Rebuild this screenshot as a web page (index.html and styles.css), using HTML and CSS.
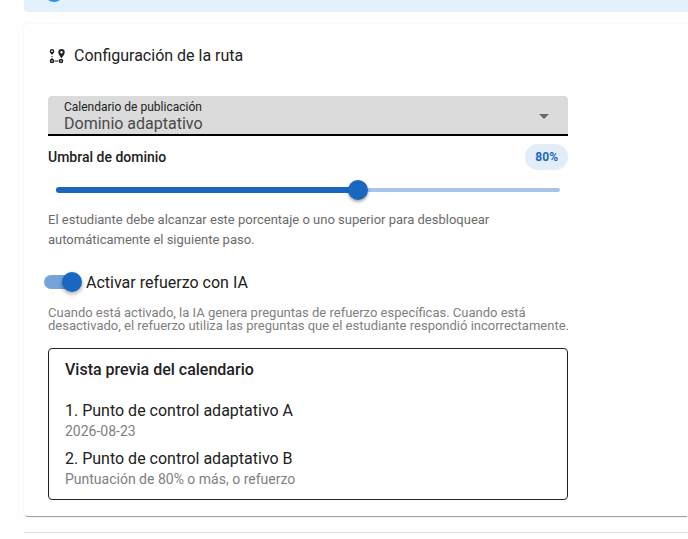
FILE: index.html
```html
<!DOCTYPE html>
<html lang="es">
<head>
  <meta charset="UTF-8">
  <meta name="viewport" content="width=device-width, initial-scale=1.0">
  <title>Configuración de la ruta</title>
  <link rel="stylesheet" href="styles.css">
</head>
<body>
  <main class="page">
    <div class="info-banner">
      <svg class="info-icon" viewBox="0 0 20 20" aria-hidden="true">
        <circle cx="10" cy="10" r="10" fill="#2196f3"/>
        <path d="M9 9h2v6H9zM9 5h2v2H9z" fill="#fff"/>
      </svg>
    </div>

    <section class="card">
      <h2 class="card-title">
        <svg class="route-icon" viewBox="0 0 18 16" aria-hidden="true">
          <g fill="none" stroke="#212121" stroke-width="1.6">
            <circle cx="4" cy="3.200" r="1.500"/>
            <circle cx="4" cy="13" r="1.500"/>
            <circle cx="13" cy="13" r="1.500"/>
          </g>
          <path d="M1.900 4.200h4.200L4 7z" fill="#212121"/>
          <circle cx="4" cy="3.200" r=".7" fill="#fff"/>
          <path d="M4 8v1M4 10v1M6.500 13h4" fill="none" stroke="#212121" stroke-width="1.2"/>
          <path fill="#212121" fill-rule="evenodd" d="M13.500 1a3.200 3.200 0 0 0-3.200 3.200c0 2.300 3.200 6 3.200 6s3.200-3.700 3.200-6A3.200 3.200 0 0 0 13.500 1zm0 2a1.200 1.200 0 1 1 0 2.400 1.200 1.200 0 0 1 0-2.400z"/>
        </svg>
        Configuración de la ruta
      </h2>

      <div class="settings">
        <div class="select-field">
          <label for="schedule">Calendario de publicación</label>
          <select id="schedule">
            <option>Dominio adaptativo</option>
          </select>
        </div>

        <div class="threshold-header">
          <label for="threshold">Umbral de dominio</label>
          <output class="badge" for="threshold">80%</output>
        </div>
        <div class="slider">
          <div class="slider-track"></div>
          <div class="slider-range">
            <div class="slider-fill" style="width: 60%"></div>
          </div>
          <input type="range" id="threshold" min="50" max="100" value="80">
        </div>
        <p class="help">El estudiante debe alcanzar este porcentaje o uno superior para desbloquear automáticamente el siguiente paso.</p>

        <div class="toggle">
          <input type="checkbox" id="reinforcement" role="switch" checked>
          <label for="reinforcement">Activar refuerzo con IA</label>
        </div>
        <p class="help toggle-help">Cuando está activado, la IA genera preguntas de refuerzo específicas. Cuando está desactivado, el refuerzo utiliza las preguntas que el estudiante respondió incorrectamente.</p>

        <div class="preview">
          <h3>Vista previa del calendario</h3>
          <div class="preview-item">
            <div class="item-name">1. Punto de control adaptativo A</div>
            <div class="item-detail">2026-08-23</div>
          </div>
          <div class="preview-item">
            <div class="item-name">2. Punto de control adaptativo B</div>
            <div class="item-detail">Puntuación de 80% o más, o refuerzo</div>
          </div>
        </div>
      </div>
    </section>

    <hr class="divider">
  </main>

  <script>
    const slider = document.getElementById('threshold');
    const badge = document.querySelector('.badge');
    const fill = document.querySelector('.slider-fill');

    slider.addEventListener('input', () => {
      badge.textContent = slider.value + '%';
      fill.style.width = (slider.value - slider.min) / (slider.max - slider.min) * 100 + '%';
    });
  </script>
</body>
</html>
```
FILE: styles.css
```css
* {
  box-sizing: border-box;
}

body {
  margin: 0;
  background: #fefefe;
  color: #212121;
  font-family: Roboto, sans-serif;
  font-size: 16px;
}

.page {
  padding-left: 24px;
}

.info-banner {
  display: flex;
  align-items: flex-end;
  height: 12px;
  padding: 0 20px 10px;
  background: #e3f1fd;
  border-radius: 0 0 0 4px;
}

.info-icon {
  flex: none;
  width: 20px;
  height: 20px;
}

.card {
  margin-top: 12px;
  padding: 16px 24px;
  background: #fff;
  border-radius: 4px 0 0 4px;
  box-shadow: 0 2px 1px -1px rgba(0, 0, 0, 0.4), 0 0 2px rgba(0, 0, 0, 0.08);
}

.card-title {
  display: flex;
  align-items: center;
  gap: 8px;
  margin: 0 0 24px;
  font-size: 16px;
  font-weight: 400;
  line-height: 32px;
}

.route-icon {
  width: 18px;
  height: 16px;
}

.settings {
  max-width: 520px;
}

/* Campo de selección */
.select-field {
  display: flex;
  flex-direction: column;
  height: 40px;
  padding-top: 4px;
  background: #dbdbdb;
  border-bottom: 2px solid #000;
  border-radius: 4px 4px 0 0;
}

.select-field label {
  padding-left: 16px;
  font-size: 12px;
  line-height: 14px;
}

.select-field select {
  appearance: none;
  width: 100%;
  height: 20px;
  padding: 0 16px;
  border: none;
  background: url("data:image/svg+xml,%3Csvg xmlns='http://www.w3.org/2000/svg' viewBox='0 0 10 5'%3E%3Cpath d='M0 0h10L5 5z' fill='%23686868'/%3E%3C/svg%3E") no-repeat right 19px top / 10px 5px;
  color: #494949;
  font: inherit;
  line-height: 18px;
}

/* Umbral */
.threshold-header {
  display: flex;
  align-items: center;
  justify-content: space-between;
  margin-top: 8px;
  font-size: 14px;
  font-weight: 500;
}

.badge {
  padding: 0 10px;
  background: #e3edf8;
  border-radius: 13px;
  color: #1967c0;
  font-size: 12px;
  font-weight: 700;
  line-height: 26px;
}

.slider {
  display: grid;
  align-items: center;
  height: 40px;
}

.slider > * {
  grid-area: 1 / 1;
}

.slider-track,
.slider-range {
  margin: 0 8px;
}

.slider-track {
  height: 4px;
  border-radius: 2px;
  background: #a6c5e6;
}

.slider-fill {
  height: 6px;
  border-radius: 3px;
  background: #1967c0;
}

.slider input {
  appearance: none;
  height: 20px;
  margin: 0 -2px;
  background: none;
}

.slider input::-webkit-slider-thumb {
  appearance: none;
  width: 20px;
  height: 20px;
  border-radius: 50%;
  background: #1967c0;
  box-shadow: 0 2px 3px rgba(0, 0, 0, 0.35);
}

.help {
  margin: 0 -4px 0 0;
  color: #6b6b6b;
  font-size: 13px;
  line-height: 20px;
}

/* Interruptor */
.toggle {
  display: flex;
  align-items: center;
  gap: 4px;
  height: 40px;
  margin: 12px 0 0 -4px;
}

.toggle input {
  appearance: none;
  display: grid;
  align-items: center;
  width: 38px;
  height: 20px;
  margin: 0;
}

.toggle input::before,
.toggle input::after {
  content: "";
  grid-area: 1 / 1;
}

.toggle input::before {
  width: 36px;
  height: 14px;
  border-radius: 7px;
  background: #9e9e9e;
}

.toggle input::after {
  width: 20px;
  height: 20px;
  border-radius: 50%;
  background: #fafafa;
  box-shadow: 0 2px 4px rgba(0, 0, 0, 0.35);
}

.toggle input:checked::before {
  background: #75a4d9;
}

.toggle input:checked::after {
  justify-self: end;
  background: #1967c0;
}

.toggle-help {
  margin-top: 4px;
  color: #808080;
  line-height: 13px;
}

/* Vista previa */
.preview {
  margin-top: 16px;
  padding: 8px 16px;
  border: 1px solid #212121;
  border-radius: 4px;
}

.preview h3 {
  margin: 0 0 12px;
  font-size: 16px;
  font-weight: 500;
  line-height: 26px;
}

.preview-item {
  padding: 4px 0;
}

.item-name {
  line-height: 24px;
}

.item-detail {
  color: #808080;
  font-size: 14px;
  line-height: 16px;
}

.divider {
  margin: 16px 0 0;
  border: none;
  border-top: 1px solid #e0e0e0;
}
```
